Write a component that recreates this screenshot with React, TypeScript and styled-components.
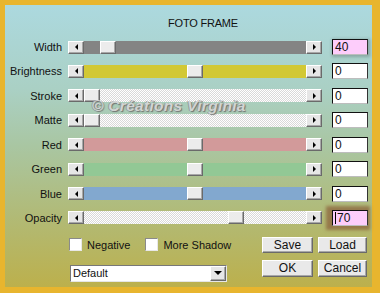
import React from 'react'
import styled, { createGlobalStyle, css } from 'styled-components'

const GlobalStyle = createGlobalStyle`
  html, body {
    margin: 0;
    padding: 0;
  }
  body {
    font-family: 'Liberation Sans', Arial, sans-serif;
    font-size: 11px;
    color: #111;
  }
`

const raised = css`
  border: 1px solid;
  border-color: #ffffff #6a6a6a #6a6a6a #ffffff;
  box-shadow: inset -1px -1px 0 #a8a8a8;
`

const Frame = styled.div`
  width: 380px;
  height: 293px;
  box-sizing: border-box;
  background: #e8b52e;
  padding: 5px 8px 6px 5px;
`

const Panel = styled.div`
  position: relative;
  height: 100%;
  box-sizing: border-box;
  background: linear-gradient(#acd9df 0%, #aad0c4 30%, #a9c6a2 50%, #b1ba76 75%, #bcb04c 100%);
  display: flex;
  flex-direction: column;
  padding-top: 12px;
`

const Title = styled.div`
  height: 13px;
  line-height: 13px;
  padding-left: 163px;
  font-size: 11px;
  letter-spacing: -0.2px;
`

const Rows = styled.div`
  display: flex;
  flex-direction: column;
  gap: 8.43px;
  margin-top: 9px;
`

const Row = styled.div`
  display: flex;
  align-items: center;
  height: 16px;
`

const Label = styled.div`
  width: 57px;
  margin-right: 6px;
  text-align: right;
  white-space: nowrap;
`

const Slider = styled.div`
  display: flex;
  width: 254px;
  height: 13px;
`

const ArrowButton = styled.div`
  ${raised};
  box-sizing: border-box;
  width: 16px;
  height: 13px;
  background: #e6e6e6;
  display: flex;
  align-items: center;
  justify-content: center;
`

const Tri = styled.div<{ $dir: 'left' | 'right' | 'down' }>`
  width: 0;
  height: 0;
  ${(p) =>
    p.$dir === 'left'
      ? 'border-top: 3px solid transparent; border-bottom: 3px solid transparent; border-right: 3px solid #000;'
      : p.$dir === 'right'
      ? 'border-top: 3px solid transparent; border-bottom: 3px solid transparent; border-left: 3px solid #000;'
      : 'border-left: 4px solid transparent; border-right: 4px solid transparent; border-top: 4px solid #000;'}
`

const dither = css`
  background-color: #ffffff;
  background-image: repeating-conic-gradient(#ffffff 0 25%, #d9d9d9 0 50%);
  background-size: 2px 2px;
`

const Track = styled.div<{ $color?: string }>`
  position: relative;
  flex: 1;
  ${(p) => (p.$color ? `background: ${p.$color};` : dither)}
`

const Thumb = styled.div`
  ${raised};
  position: absolute;
  top: 0;
  box-sizing: border-box;
  width: 16px;
  height: 13px;
  background: #ececec;
`

const ValueBox = styled.div<{ $pink?: boolean; $glow?: 'soft' | 'brown' }>`
  box-sizing: border-box;
  width: 36px;
  height: 16px;
  margin-left: 10px;
  border: 1px solid;
  border-color: #111 #333 #bdbdbd #111;
  background: ${(p) => (p.$pink ? '#fdcdfb' : '#ffffff')};
  font-size: 12px;
  line-height: 14px;
  padding-left: 2px;
  display: flex;
  align-items: center;
  ${(p) =>
    p.$glow === 'soft' &&
    'box-shadow: 1px 1px 3px 1px rgba(60, 60, 60, 0.3);'}
  ${(p) =>
    p.$glow === 'brown' &&
    'box-shadow: -2px 0 3px 4px rgba(140, 100, 62, 0.75);'}
`

const Caret = styled.span`
  display: inline-block;
  width: 1px;
  height: 12px;
  background: #000;
  margin-right: 1px;
`

const Watermark = styled.div`
  position: absolute;
  left: 87px;
  top: 92px;
  font-size: 15.5px;
  font-weight: bold;
  font-style: italic;
  letter-spacing: 0.3px;
  color: #d6d6d6;
  text-shadow: 1px 1px 1px #6c6c6c, -1px 0 0 #9a9a9a;
  opacity: 0.9;
  white-space: nowrap;
`

const Bottom = styled.div`
  display: flex;
  margin-top: 11px;
  padding-left: 64px;
`

const LeftCol = styled.div`
  display: flex;
  flex-direction: column;
  width: 193px;
`

const Checks = styled.div`
  display: flex;
  align-items: center;
  height: 16px;
`

const CheckItem = styled.label`
  display: flex;
  align-items: center;
  gap: 5px;
  margin-right: 15px;
`

const CheckBox = styled.span`
  box-sizing: border-box;
  width: 13px;
  height: 13px;
  background: #ffffff;
  border: 1px solid;
  border-color: #8a8a8a #e8e8e8 #e8e8e8 #8a8a8a;
`

const Dropdown = styled.div`
  box-sizing: border-box;
  display: flex;
  align-items: center;
  width: 157px;
  height: 17px;
  margin-top: 12px;
  margin-left: 1px;
  background: #ffffff;
  border: 1px solid;
  border-color: #777 #e6e6e6 #e6e6e6 #777;
  padding-left: 2px;
`

const DropText = styled.span`
  flex: 1;
`

const DropButton = styled(ArrowButton)`
  width: 16px;
  height: 15px;
`

const Buttons = styled.div`
  display: grid;
  grid-template-columns: 51px 49px;
  grid-template-rows: 16px 17px;
  column-gap: 5px;
  row-gap: 7px;
`

const Button = styled.div`
  ${raised};
  box-sizing: border-box;
  background: #e9e9e9;
  display: flex;
  align-items: center;
  justify-content: center;
  font-size: 12px;
`

type SliderRow = {
  label: string
  value: number
  min: number
  max: number
  color?: string
  pink?: boolean
  glow?: 'soft' | 'brown'
  caret?: boolean
}

const rows: SliderRow[] = [
  { label: 'Width', value: 40, min: 0, max: 500, color: '#848484', pink: true, glow: 'soft' },
  { label: 'Brightness', value: 0, min: -100, max: 100, color: '#d2c834' },
  { label: 'Stroke', value: 0, min: 0, max: 100 },
  { label: 'Matte', value: 0, min: 0, max: 100 },
  { label: 'Red', value: 0, min: -255, max: 255, color: '#d29a9a' },
  { label: 'Green', value: 0, min: -255, max: 255, color: '#92c895' },
  { label: 'Blue', value: 0, min: -255, max: 255, color: '#82a8cf' },
  { label: 'Opacity', value: 70, min: 0, max: 100, pink: true, glow: 'brown', caret: true },
]

const TRAVEL = 206

export default function App() {
  return (
    <Frame>
      <GlobalStyle />
      <Panel>
        <Title>FOTO FRAME</Title>
        <Rows>
          {rows.map((r) => (
            <Row key={r.label}>
              <Label>{r.label}</Label>
              <Slider>
                <ArrowButton>
                  <Tri $dir="left" />
                </ArrowButton>
                <Track $color={r.color}>
                  <Thumb style={{ left: Math.round(((r.value - r.min) / (r.max - r.min)) * TRAVEL) }} />
                </Track>
                <ArrowButton>
                  <Tri $dir="right" />
                </ArrowButton>
              </Slider>
              <ValueBox $pink={r.pink} $glow={r.glow}>
                {r.caret && <Caret />}
                {r.value}
              </ValueBox>
            </Row>
          ))}
        </Rows>
        <Bottom>
          <LeftCol>
            <Checks>
              <CheckItem>
                <CheckBox />
                Negative
              </CheckItem>
              <CheckItem>
                <CheckBox />
                More Shadow
              </CheckItem>
            </Checks>
            <Dropdown>
              <DropText>Default</DropText>
              <DropButton>
                <Tri $dir="down" />
              </DropButton>
            </Dropdown>
          </LeftCol>
          <Buttons>
            <Button>Save</Button>
            <Button>Load</Button>
            <Button>OK</Button>
            <Button>Cancel</Button>
          </Buttons>
        </Bottom>
        <Watermark>© Créations Virginia</Watermark>
      </Panel>
    </Frame>
  )
}
